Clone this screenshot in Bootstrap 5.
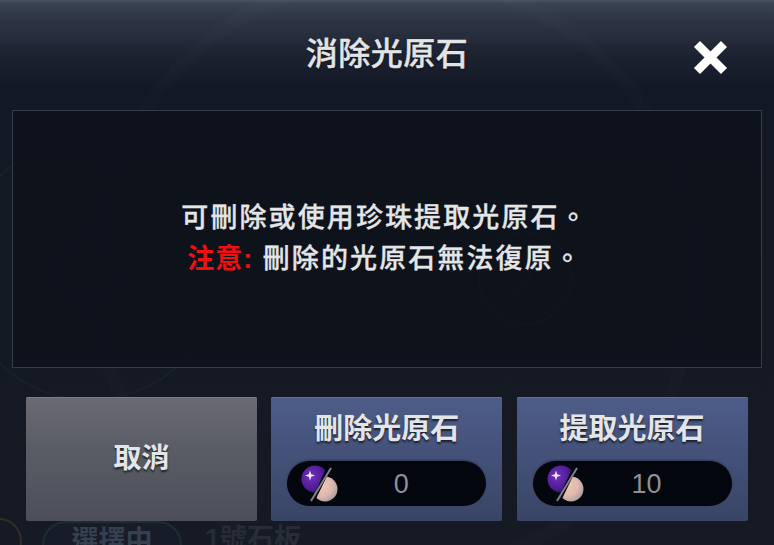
<!DOCTYPE html>
<html lang="zh-Hant">
<head>
<meta charset="utf-8">
<title>消除光原石</title>
<link href="https://cdn.jsdelivr.net/npm/bootstrap@5.3.0/dist/css/bootstrap.min.css" rel="stylesheet">
<style>
html,body{height:100%;margin:0;overflow:hidden;background:#121722;}
body{font-family:"Liberation Sans","Noto Sans CJK TC",sans-serif;}
.stage{position:relative;width:774px;height:545px;overflow:hidden;
 background:linear-gradient(180deg,#4a5563 0,#3a4352 3px,#2f3746 18px,#1c2230 55px,#131826 90px,#131823 200px,#151a25 545px);}
.deco{position:absolute;inset:0;width:774px;height:545px;pointer-events:none;}
.content{position:relative;}
.head{height:110px;}
.head-title{flex:1;text-align:center;font-size:32px;font-weight:500;color:#e2e4e6;line-height:36px;letter-spacing:.5px;padding-bottom:2px;-webkit-text-stroke:.4px #e2e4e6;text-shadow:0 1px 2px rgba(0,0,0,.7);}
.close-x{position:absolute;left:692px;top:39px;width:37px;height:37px;}
.notice{margin:0 12px;height:258px;background:rgba(12,16,26,.75);border:1px solid #343d4c;color:#e4e5e7;font-size:27px;font-weight:500;line-height:41px;letter-spacing:2.1px;text-align:center;padding-right:4px;-webkit-text-stroke:.3px #e4e5e7;}
.warn{color:#f01010;font-weight:700;letter-spacing:1px;-webkit-text-stroke:0;}
.act-row{margin:29px 26px 0;height:124px;gap:14.3px;}
.act{flex:0 0 231px;height:124px;border-radius:2px;color:#e3e5e8;}
.act-gray{background:linear-gradient(180deg,#6a6b72 0,#5b5d66 40%,#4c4f5a 100%);box-shadow:inset 0 1px 0 #7c7e85;font-size:28px;font-weight:700;text-shadow:0 2px 2px rgba(0,0,0,.65);}
.act-blue{background:linear-gradient(180deg,#4e5d88 0,#44527a 45%,#394564 100%);box-shadow:inset 0 1px 0 #5f70a0;}
.act-name{font-size:29px;font-weight:700;line-height:34px;margin-top:15px;text-shadow:0 2px 2px rgba(0,0,0,.65);}
.cost{position:relative;width:199px;height:45px;margin:15px auto 0;border-radius:23px;background:#04060d;color:#8d9096;font-size:27px;font-weight:500;padding-left:29px;line-height:46px;text-align:center;box-shadow:0 -1px 2px rgba(0,0,0,.3);}
.gem{position:absolute;left:13px;top:1px;width:42px;height:42px;}
.peek{margin:0 0 0 42px;height:40px;font-size:27px;font-weight:700;line-height:36px;}
.peek-pill{width:140px;height:48px;border-radius:24px;background:#171c28;border:2px solid #1d2c37;text-align:center;color:#35404e;}
.peek-label{margin-left:23px;color:#272c38;}
.ring{position:absolute;left:-24px;top:518px;width:46px;height:46px;border-radius:50%;border:2px solid #332f24;}
</style>
</head>
<body>
<div class="stage">
<svg class="deco" viewBox="0 0 774 545" fill="none" stroke="#1b2230">
 <circle cx="395" cy="275" r="300" stroke-width="14" stroke="#ffffff" stroke-opacity=".012"/>
 <circle cx="90" cy="270" r="130" stroke-width="2" stroke-opacity=".7"/>
 <path d="M90 225l42 42-42 42-42-42z" stroke-width="10" stroke="#141a27"/>
 <circle cx="525" cy="278" r="46" stroke-width="2"/>
 <path d="M515 292l22-24" stroke-width="3"/>
</svg>
<div class="ring"></div>
<div class="content">
 <div class="head d-flex align-items-center">
  <div class="head-title">消除光原石</div>
  <svg class="close-x" viewBox="0 0 37 37"><path d="M5 5L32 32M32 5L5 32" stroke="#fff" stroke-width="8.500" fill="none"/></svg>
 </div>
 <div class="notice d-flex flex-column justify-content-center">
  <div>可刪除或使用珍珠提取光原石。</div>
  <div><span class="warn">注意:</span> 刪除的光原石無法復原。</div>
 </div>
 <div class="act-row d-flex">
  <div class="act act-gray d-flex align-items-center justify-content-center">取消</div>
  <div class="act act-blue text-center">
   <div class="act-name">刪除光原石</div>
   <div class="cost">
    <svg class="gem" viewBox="0 0 42 42"><defs><radialGradient id="pa" cx=".35" cy=".4" r=".8"><stop offset="0" stop-color="#7430bd"/><stop offset=".6" stop-color="#4c1b92"/><stop offset="1" stop-color="#25104f"/></radialGradient><radialGradient id="pb" cx=".35" cy=".35" r=".8"><stop offset="0" stop-color="#efc8b5"/><stop offset=".55" stop-color="#e0b8ae"/><stop offset="1" stop-color="#98989c"/></radialGradient><clipPath id="ca"><path d="M-5 -5H31L12 38H-5z"/></clipPath><clipPath id="cb"><path d="M31 6H45V45H12z"/></clipPath></defs><circle cx="15" cy="17" r="13.500" fill="url(#pa)" clip-path="url(#ca)"/><circle cx="25" cy="27" r="12.500" fill="url(#pb)" clip-path="url(#cb)"/><path d="M11 39L31 6" stroke="#7f8187" stroke-width="2"/><path d="M10 8.500l1.200 3.800L15 13.500l-3.800 1.200L10 18.500l-1.200-3.800L5 13.500l3.800-1.200z" fill="#efe6fa"/></svg>
    0
   </div>
  </div>
  <div class="act act-blue text-center">
   <div class="act-name">提取光原石</div>
   <div class="cost">
    <svg class="gem" viewBox="0 0 42 42"><circle cx="15" cy="17" r="13.500" fill="url(#pa)" clip-path="url(#ca)"/><circle cx="25" cy="27" r="12.500" fill="url(#pb)" clip-path="url(#cb)"/><path d="M11 39L31 6" stroke="#7f8187" stroke-width="2"/><path d="M10 8.500l1.200 3.800L15 13.500l-3.800 1.200L10 18.500l-1.200-3.800L5 13.500l3.800-1.200z" fill="#efe6fa"/></svg>
    10
   </div>
  </div>
 </div>
 <div class="peek d-flex">
  <div class="peek-pill">選擇中</div>
  <div class="peek-label">1號石板</div>
 </div>
</div>
</div>
<script src="https://cdn.jsdelivr.net/npm/bootstrap@5.3.0/dist/js/bootstrap.bundle.min.js"></script>
</body>
</html>
